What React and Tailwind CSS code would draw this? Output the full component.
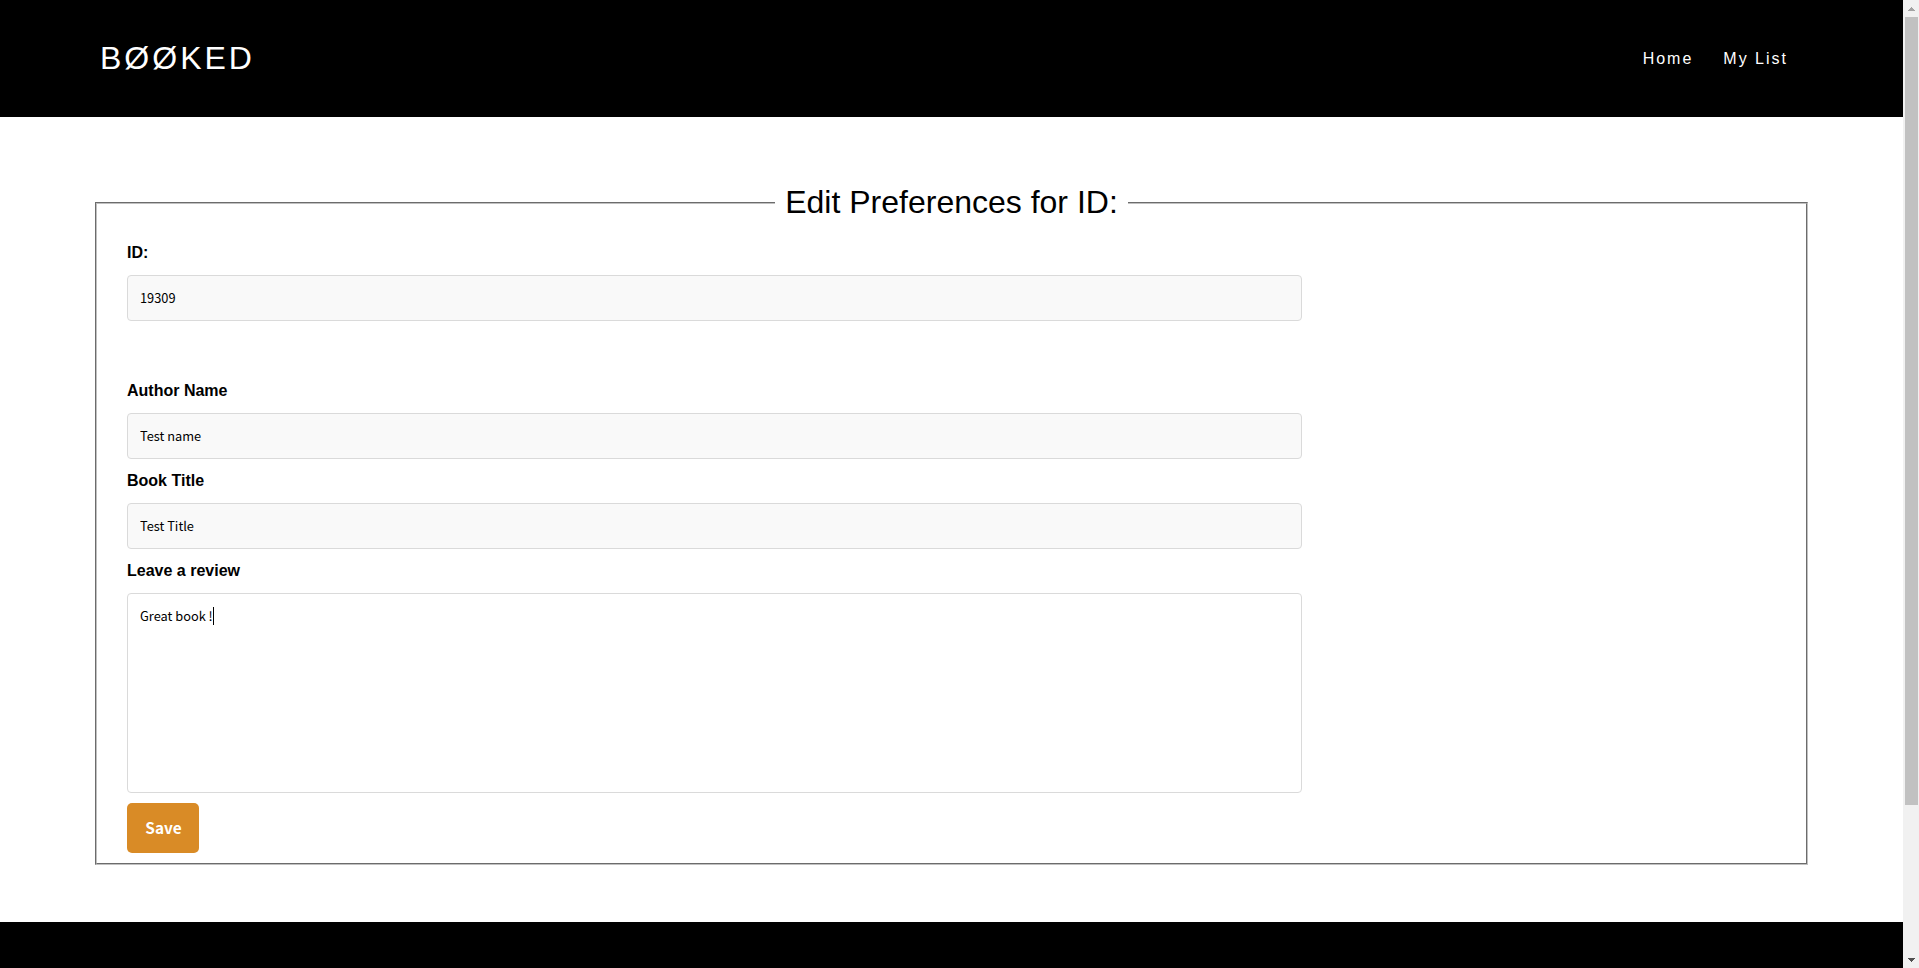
const inputClass =
  "block h-[46px] w-[1175px] rounded-[4px] border border-[#dadada] bg-[#f9f9f9] px-3 pb-[2px] font-['Noto_Sans_CJK_JP','Noto_Sans',sans-serif] text-[12.8px] leading-5 text-black outline-none";

function Field({ label, value, className = "" }) {
  return (
    <div className={className}>
      <label className="block h-[34px] pt-px text-base leading-[22px] font-bold">{label}</label>
      <input className={inputClass} defaultValue={value} />
    </div>
  );
}

function Header() {
  return (
    <header className="flex h-[117px] items-start justify-between bg-black pr-[115px] pl-[100px] text-white">
      <div className="pt-[37px] text-[32px] leading-[42px] tracking-[3px]">BØØKED</div>
      <nav className="flex gap-[30px] pt-[47px] text-base leading-6 tracking-[2px]">
        <a>Home</a>
        <a>My List</a>
      </nav>
    </header>
  );
}

function Scrollbar() {
  return (
    <div className="flex h-full w-4 shrink-0 flex-col items-center bg-[#f1f1f1]">
      <svg className="h-4 w-4 shrink-0" viewBox="0 0 16 16" shapeRendering="crispEdges">
        <path d="M5 11h7L8.5 7z" fill="#a3a3a3" />
      </svg>
      <div className="mt-px ml-px h-[788px] w-[13px] bg-[#c1c1c1]" />
      <svg className="mt-auto h-4 w-4 shrink-0" viewBox="0 0 16 16" shapeRendering="crispEdges">
        <path d="M5 6h7L8.5 10z" fill="#505050" />
      </svg>
    </div>
  );
}

export default function App() {
  return (
    <div className="flex h-[968px] w-[1919px] overflow-hidden bg-white font-['Liberation_Sans',Arial,sans-serif] text-black">
      <div className="flex min-w-0 flex-1 flex-col">
        <Header />
        <main className="flex-1 pt-[64px] pl-[95px]">
          <fieldset className="h-[684px] w-[1713px] border-2 border-[#c0c0c0] px-[30px] [border-style:groove]">
            <legend className="mx-auto h-[43px] px-[10px] text-[32px] leading-[43px]">
              Edit Preferences for ID:
            </legend>
            <div className="pt-[17px]">
              <Field label="ID:" value="19309" />
              <Field className="mt-[58px]" label="Author Name" value="Test name" />
              <Field className="mt-[10px]" label="Book Title" value="Test Title" />
              <label className="mt-[10px] block h-[34px] pt-px text-base leading-[22px] font-bold">
                Leave a review
              </label>
              <div className="flex h-[200px] w-[1175px] items-start rounded-[4px] border border-[#dadada] px-3 pt-[13px] font-['Noto_Sans_CJK_JP','Noto_Sans',sans-serif] text-[12.8px] leading-[18px]">
                <span>Great book !</span>
                <span className="h-[18px] w-px bg-black" />
              </div>
              <button className="mt-[10px] block h-[50px] w-[72px] rounded-[5px] bg-[#d98b26] pb-[3px] pl-px font-['Noto_Sans_CJK_JP','Noto_Sans',sans-serif] text-[15.4px] leading-6 font-bold text-white">
                Save
              </button>
            </div>
          </fieldset>
        </main>
        <footer className="h-[46px] bg-black" />
      </div>
      <Scrollbar />
    </div>
  );
}
